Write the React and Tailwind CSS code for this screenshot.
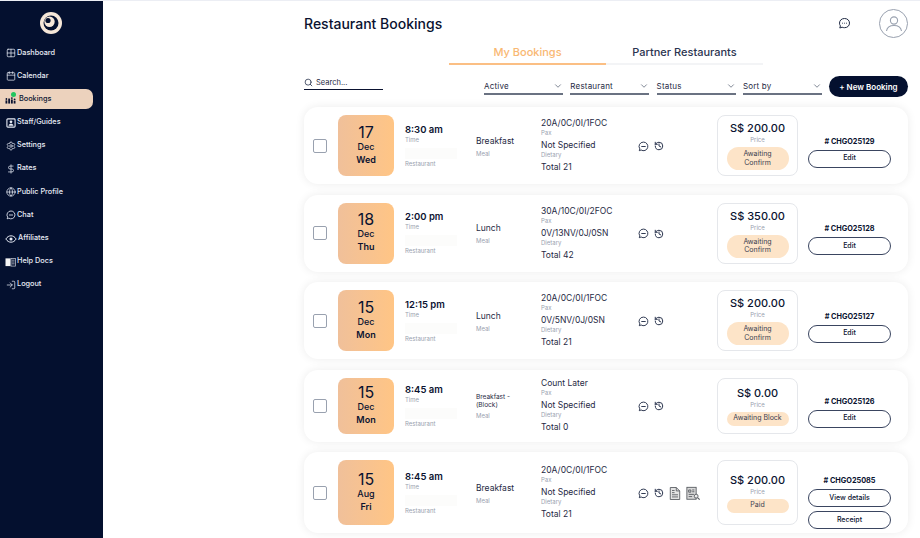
import React from 'react';
import {
  Grid2x2, Calendar, Settings, DollarSign, Globe, LogIn, Search, ChevronDown, History,
} from 'lucide-react';

// icons lucide has no close match for
const ChatDash = ({ size = 11, className = '' }) => (
  <svg width={size} height={size} viewBox="0 0 12 12" fill="none" stroke="currentColor" strokeWidth="1" className={className}>
    <path d="M6 1.2a4.7 4.7 0 1 1-2.6 8.6L1.4 10.6l.6-2A4.7 4.7 0 0 1 6 1.2z" strokeLinejoin="round" />
    <path d="M3.6 6h4.8" />
  </svg>
);

const HeaderChat = () => (
  <svg width="13" height="13" viewBox="0 0 13 13" fill="none" stroke="#1f2a44" strokeWidth="1" className="mr-[28px]">
    <path d="M6.5 1.5c3 0 5 2 5 4.6s-2 4.6-5 4.6c-.9 0-1.700-.2-2.400-.5l-2.300.8.600-2.100A4.500 4.500 0 0 1 1.500 6.100c0-2.600 2-4.600 5-4.600z" strokeLinejoin="round" />
    <path d="M4 6.200h.8M6.100 6.200h.8M8.200 6.200H9" />
  </svg>
);

const BookingsIcon = ({ size = 11 }) => (
  <svg width={size + 1} height={size} viewBox="0 0 12 11" fill="#0a1230">
    <rect x="0.500" y="7" width="2" height="3.500" />
    <rect x="3.500" y="5" width="2" height="5.500" />
    <rect x="6.500" y="6" width="2" height="4.500" />
    <rect x="9.500" y="7.500" width="2" height="3" />
    <circle cx="1.500" cy="5.500" r="1" />
    <circle cx="7.500" cy="4.500" r="1" />
    <circle cx="10.500" cy="6" r="1" />
  </svg>
);

const StaffIcon = ({ size = 11 }) => (
  <svg width={size} height={size} viewBox="0 0 11 11" fill="none" stroke="currentColor">
    <rect x="1" y="1" width="9" height="9" rx="1" strokeWidth="1.200" />
    <circle cx="5.500" cy="4.200" r="1.500" fill="currentColor" stroke="none" />
    <path d="M2.800 8.600c.4-1.500 1.400-2.200 2.700-2.200s2.300.7 2.700 2.200z" fill="currentColor" stroke="none" />
  </svg>
);

const AffiliatesIcon = ({ size = 11 }) => (
  <svg width={size + 2} height={size} viewBox="0 0 13 11" fill="none" stroke="currentColor" strokeWidth="1.100">
    <path d="M.8 5.500C2.500 3 4.300 2 6.500 2s4 1 5.700 3.500C10.500 8 8.700 9 6.500 9S2.500 8 .8 5.500z" />
    <circle cx="6.500" cy="5.500" r="1.700" fill="currentColor" stroke="none" />
  </svg>
);

const HelpIcon = ({ size = 11 }) => (
  <svg width={size + 1} height={size} viewBox="0 0 12 11" fill="none">
    <rect x="0.500" y="1.500" width="5.500" height="8.500" fill="#f4f4f4" />
    <rect x="6.500" y="1.500" width="5" height="8.500" stroke="#c8ccd6" strokeWidth="0.800" />
    <path d="M7.500 3.500h3M7.500 5.500h3M7.500 7.500h3" stroke="#c8ccd6" strokeWidth="0.800" />
  </svg>
);

const DocIcon = () => (
  <svg width="12" height="15" viewBox="0 0 14 16" fill="#e3e3e3" stroke="#55595f" strokeWidth="1">
    <path d="M1.500 1h7l4 4v10h-11z" strokeLinejoin="round" />
    <path d="M8.500 1v4h4" fill="none" />
    <path d="M3.500 4.500h3M3.500 7h3M3.500 9.500h7M3.500 12h7" fill="none" />
  </svg>
);

const DocSearchIcon = () => (
  <svg width="15" height="15" viewBox="0 0 17 16" fill="#d9d9d9" stroke="#55595f" strokeWidth="1">
    <rect x="1" y="1" width="10.500" height="13.500" />
    <path d="M3 4h2.500v2.500H3zM7 4h2.500M7 6h2.500M3 9h6M3 11.500h4" fill="none" />
    <circle cx="11.500" cy="11" r="2.200" fill="#ececec" />
    <path d="M13 12.700l2.500 2.300" strokeWidth="1.300" />
  </svg>
);

const nav = [
  { label: 'Dashboard', icon: Grid2x2 },
  { label: 'Calendar', icon: Calendar },
  { label: 'Bookings', icon: BookingsIcon, active: true },
  { label: 'Staff/Guides', icon: StaffIcon },
  { label: 'Settings', icon: Settings },
  { label: 'Rates', icon: DollarSign },
  { label: 'Public Profile', icon: Globe },
  { label: 'Chat', icon: ChatDash },
  { label: 'Affiliates', icon: AffiliatesIcon, wide: true },
  { label: 'Help Docs', icon: HelpIcon, wide: true },
  { label: 'Logout', icon: LogIn },
];

const bookings = [
  { day: '17', month: 'Dec', dow: 'Wed', time: '8:30 am', meal: 'Breakfast', pax: '20A/0C/0I/1FOC', dietary: 'Not Specified', total: 'Total 21', price: 'S$ 200.00', status: 'Awaiting Confirm', id: '# CHGO25129', h: 'h-[77px]' },
  { day: '18', month: 'Dec', dow: 'Thu', time: '2:00 pm', meal: 'Lunch', pax: '30A/10C/0I/2FOC', dietary: '0V/13NV/0J/0SN', total: 'Total 42', price: 'S$ 350.00', status: 'Awaiting Confirm', id: '# CHGO25128', h: 'h-[77px]' },
  { day: '15', month: 'Dec', dow: 'Mon', time: '12:15 pm', meal: 'Lunch', pax: '20A/0C/0I/1FOC', dietary: '0V/5NV/0J/0SN', total: 'Total 21', price: 'S$ 200.00', status: 'Awaiting Confirm', id: '# CHGO25127', h: 'h-[77px]' },
  { day: '15', month: 'Dec', dow: 'Mon', time: '8:45 am', meal: 'Breakfast - (Block)', small: true, pax: 'Count Later', dietary: 'Not Specified', total: 'Total 0', price: 'S$ 0.00', status: 'Awaiting Block', id: '# CHGO25126', h: 'h-[72px]' },
  { day: '15', month: 'Aug', dow: 'Fri', time: '8:45 am', meal: 'Breakfast', pax: '20A/0C/0I/1FOC', dietary: 'Not Specified', total: 'Total 21', price: 'S$ 200.00', status: 'Paid', id: '# CHGO25085', paid: true, h: 'h-[81px]' },
];

const Caption = ({ children }) => <div className="text-[6px] leading-[8px] text-gray-400">{children}</div>;

const Filter = ({ label }) => (
  <div className="flex w-[79px] items-center justify-between border-b-2 border-gray-500 pb-px text-[8px] tracking-[0.2px] text-[#1f2a44]">
    {label}
    <ChevronDown size={10} className="text-gray-500" />
  </div>
);

const Pill = ({ children }) => (
  <button className="h-[18px] w-[83px] rounded-full border border-[#3a4560] bg-white text-[7px] font-medium text-[#0a1230]">{children}</button>
);

const BookingRow = ({ b }) => (
  <div className={`flex ${b.h} items-center rounded-[14px] bg-white pl-[9px] shadow-[0_0_10px_rgba(0,0,0,0.08)]`}>
    <div className="mr-[11px] h-[14px] w-[14px] shrink-0 rounded-[2px] border-[1.5px] border-gray-400" />
    <div className="mr-[11px] flex h-[calc(100%-16px)] w-[56px] shrink-0 flex-col items-center justify-center rounded-[8px] bg-gradient-to-r from-[#f0c09a] to-[#ffc585] pb-[2px] text-[#0a1230]">
      <div className="text-[16px] leading-[16px]">{b.day}</div>
      <div className="text-[9px] font-medium leading-[14.4px]">{b.month}</div>
      <div className="text-[9px] font-semibold leading-[11.6px]">{b.dow}</div>
    </div>
    <div className="w-[71px] shrink-0">
      <div className="text-[9.5px] font-semibold leading-[12px] text-[#0a1230]">{b.time}</div>
      <Caption>Time</Caption>
      <div className="mt-[4px] h-[11px] w-[52px] bg-[#fcfcfb]" />
      <div className="mt-[1px]"><Caption>Restaurant</Caption></div>
    </div>
    <div className="w-[65px] shrink-0 pt-[2px]">
      <div className={b.small ? 'w-[45px] text-[6.5px] leading-[8px] text-[#1f2a44]' : 'text-[8.5px] leading-[11px] text-[#1f2a44]'}>{b.meal}</div>
      <div className="mt-[3px]"><Caption>Meal</Caption></div>
    </div>
    <div className="w-[97px] shrink-0 text-[8.5px] leading-[11px] text-[#1f2a44]">
      <div>{b.pax}</div>
      <Caption>Pax</Caption>
      <div className="mt-[3px]">{b.dietary}</div>
      <Caption>Dietary</Caption>
      <div className="mt-[3px]">{b.total}</div>
    </div>
    <div className="flex w-[79px] shrink-0 items-center gap-[5px] pt-[1px] text-[#1f2a44]">
      <ChatDash size={11} />
      <History size={10} strokeWidth={2.25} />
      {b.paid && (
        <>
          <DocIcon />
          <DocSearchIcon />
        </>
      )}
    </div>
    <div className="flex h-[calc(100%-16px)] w-[81px] shrink-0 flex-col items-center justify-center rounded-[8px] border border-gray-200">
      <div className="text-[11px] font-medium leading-[14px] text-[#0a1230]">{b.price}</div>
      <div className="text-[6px] leading-[9px] text-gray-400">Price</div>
      <div className={`mt-[3px] flex w-[62px] items-center justify-center rounded-full bg-[#fde4c8] text-center text-[7px] leading-[8.5px] text-[#3a4050] ${b.status === 'Awaiting Confirm' ? 'h-[23px]' : 'h-[14px]'}`}>
        {b.status === 'Awaiting Confirm' ? <span className="w-[40px]">{b.status}</span> : b.status}
      </div>
    </div>
    <div className={`ml-[10px] flex w-[83px] shrink-0 flex-col items-center gap-[4px] ${b.paid ? 'pt-[20px]' : 'pt-[13px]'}`}>
      <div className="text-[7.3px] font-bold leading-[9px] text-[#0a1230]">{b.id}</div>
      {b.paid ? (
        <>
          <Pill>View details</Pill>
          <Pill>Receipt</Pill>
        </>
      ) : (
        <Pill>Edit</Pill>
      )}
    </div>
  </div>
);

export default function App() {
  return (
    <div className="flex h-[538px] w-[920px] overflow-hidden border-t border-[#eceef4] bg-white font-['Inter','Noto_Sans',sans-serif]">
      <aside className="w-[103px] shrink-0 bg-[#04102f]">
        <div className="flex justify-center pt-[11px] pb-[9px] pr-[1px]">
          <svg width="22" height="22" viewBox="0 0 22 22">
            <circle cx="11" cy="11" r="11" fill="#f6e7d8" />
            <circle cx="11" cy="11" r="7.500" fill="#04102f" />
            <circle cx="9.500" cy="9.800" r="5.200" fill="#f6e7d8" />
            <circle cx="8" cy="8.500" r="2.600" fill="#04102f" />
          </svg>
        </div>
        <nav className="flex flex-col gap-[3.2px]">
          {nav.map(({ label, icon: Icon, active, wide }) => (
            <div
              key={label}
              className={`relative flex h-[20px] items-center gap-[1px] text-[7.3px] font-medium ${active ? 'mr-[10px] rounded-r-[7px] bg-[#ecd2bd] pl-[5px] text-[#0a1230]' : `text-[#e8ecf6] ${wide ? 'pl-[5px]' : 'pl-[6px]'}`}`}
            >
              <Icon size={10} strokeWidth={1.75} />
              {active && <span className="absolute left-[11px] top-[3px] h-[5px] w-[5px] rounded-full bg-[#22c55e]" />}
              <span className={active ? 'ml-[2px]' : ''}>{label}</span>
            </div>
          ))}
        </nav>
      </aside>

      <main className="flex-1 pl-[201px] pr-[12px]">
        <header className="flex h-[45px] items-center">
          <h1 className="flex-1 text-[14px] font-medium text-[#0a1230]">Restaurant Bookings</h1>
          <HeaderChat />
          <div className="flex h-[29px] w-[29px] items-center justify-center rounded-full border border-gray-400 text-gray-400">
            <svg width="20" height="20" viewBox="0 0 20 20" fill="none" stroke="currentColor" strokeWidth="1.100">
              <circle cx="10" cy="6.500" r="3.600" />
              <path d="M2.500 17c.6-3.500 3.600-5.500 7.500-5.500s6.900 2 7.500 5.500" />
            </svg>
          </div>
        </header>

        <div className="-mt-[2px] ml-[145px] flex w-[314px] text-[11px] font-medium">
          <div className="h-[21px] flex-1 border-b-2 border-[#fbbf84] text-center text-[#f9b873]">My Bookings</div>
          <div className="h-[21px] flex-1 border-b-2 border-gray-100 text-center text-[#2b3450]">Partner Restaurants</div>
        </div>

        <div className="mt-[11px] flex h-[21px] items-center">
          <div className="mt-[1px] flex w-[79px] items-center gap-[3px] self-start border-b border-[#0a1230] pb-px text-[7.5px] text-[#1f2a44]">
            <Search size={9} />
            Search...
          </div>
          <div className="ml-[101px] mt-[1px] flex gap-[7.3px]">
            <Filter label="Active" />
            <Filter label="Restaurant" />
            <Filter label="Status" />
            <Filter label="Sort by" />
          </div>
          <button className="ml-[7px] h-[21px] w-[79px] rounded-full bg-[#04102f] text-[8px] font-semibold text-white">+ New Booking</button>
        </div>

        <div className="mt-[10px] flex flex-col gap-[10.5px]">
          {bookings.map((b) => <BookingRow key={b.id} b={b} />)}
        </div>
      </main>
    </div>
  );
}
